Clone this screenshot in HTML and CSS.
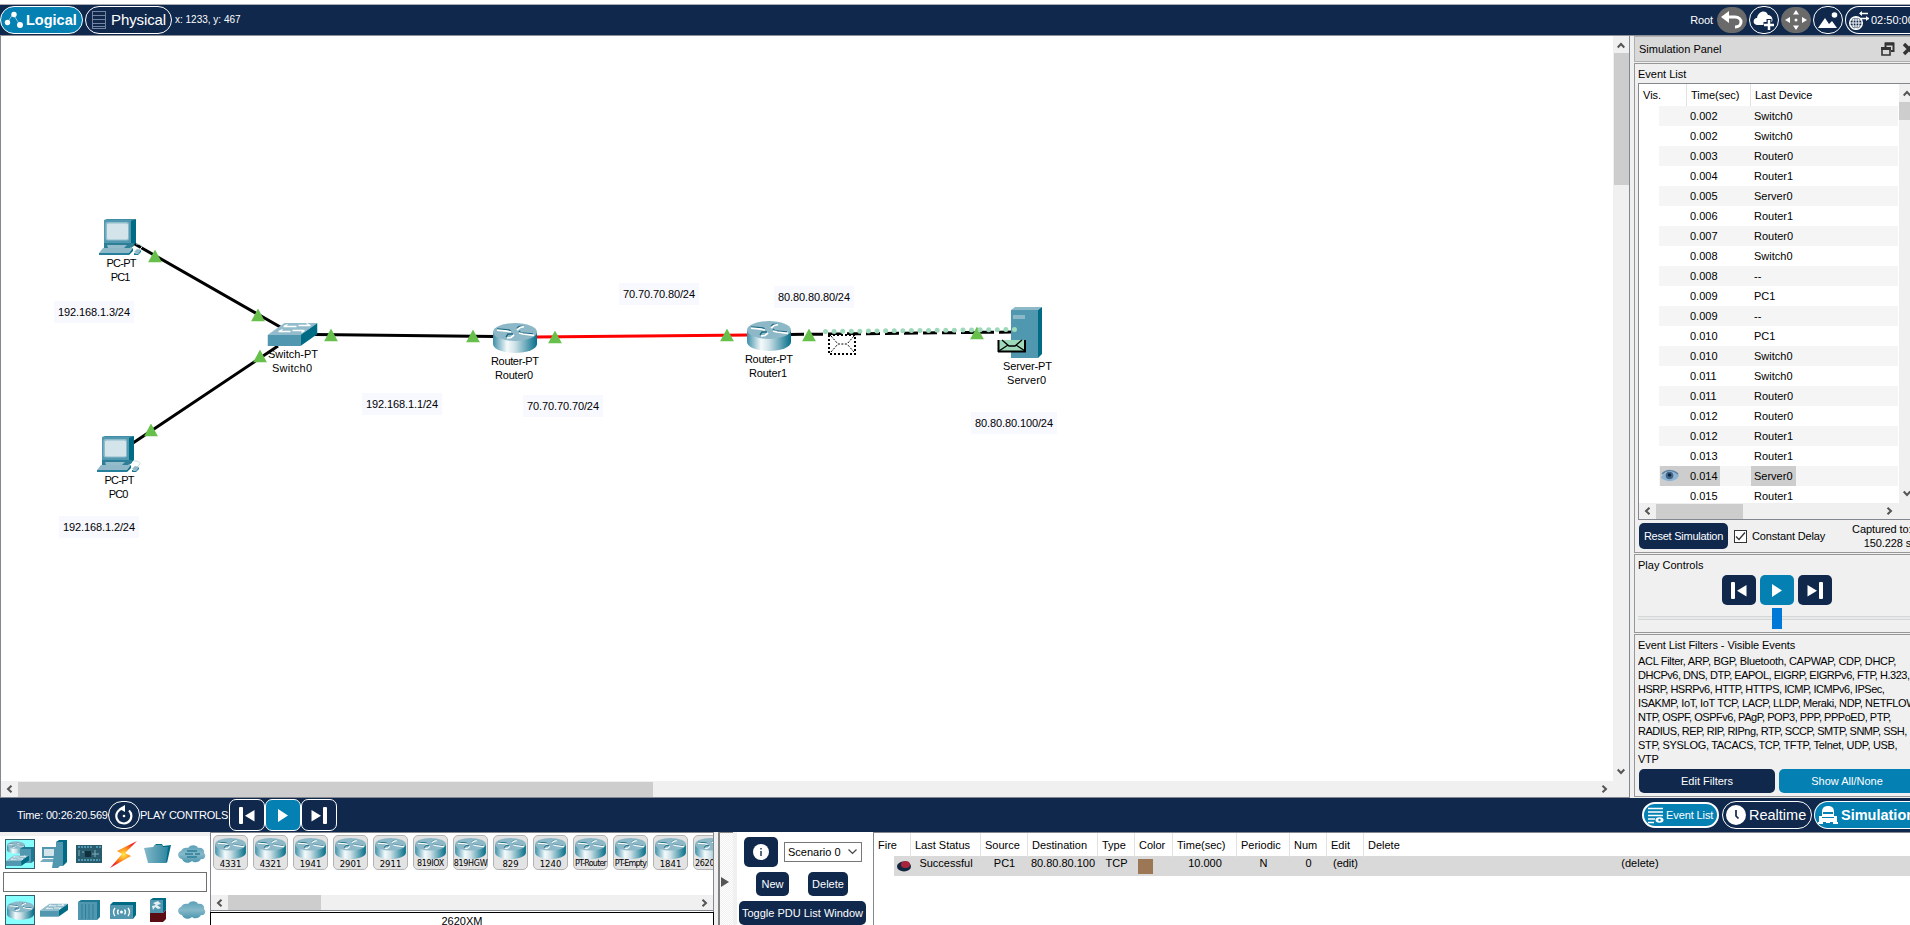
FILE: index.html
```html
<!DOCTYPE html>
<html lang="en">
<head>
<meta charset="utf-8">
<title>Network Simulator</title>
<link rel="stylesheet" href="styles.css">
</head>
<body>
<svg class="defs" width="0" height="0" aria-hidden="true">
  <defs>
    <linearGradient id="gBody"><stop offset="0" stop-color="#3f8fa8"/><stop offset=".32" stop-color="#f4fafb"/><stop offset=".5" stop-color="#cfe2e8"/><stop offset="1" stop-color="#046f8a"/></linearGradient>
    <linearGradient id="gCloud" x1="0" x2="0" y1="0" y2="1"><stop offset="0" stop-color="#5aa0b8"/><stop offset=".5" stop-color="#86b9c9"/><stop offset="1" stop-color="#4a95ae"/></linearGradient>
    <linearGradient id="gFolder"><stop offset="0" stop-color="#85b9ca"/><stop offset="1" stop-color="#2f86a0"/></linearGradient>
    <radialGradient id="gBolt"><stop offset="0" stop-color="#ffe94a"/><stop offset=".5" stop-color="#ff8a1c"/><stop offset="1" stop-color="#ee2222"/></radialGradient>
  </defs>
  <symbol id="router" viewBox="0 0 44 30">
    <path d="M0 9V21C0 26 10 30 22 30S44 26 44 21V9Z" fill="url(#gBody)"/>
    <ellipse cx="22" cy="9" rx="22" ry="9" fill="#8db8c8"/>
    <g fill="none" stroke="#1c6a80" stroke-width="1.4"><path d="M4 6l12 1 2 1.500M24 5.500l2-2h5M40 11l-12-1-2-2M20 11l-5 0-2 3"/></g>
    <g fill="none" stroke="#fff" stroke-width="1.700"><path d="M4 7.200l10 1 4 .8M24 7l3-2.500 4-.8M41 12.400l-11-1.400-4-1M21 12l-3 2.500-4 .5"/></g>
  </symbol>
  <symbol id="pc" viewBox="0 0 44 37">
    <path d="M37 25c4 0 6 1 6 3l-3 3" fill="none" stroke="#c4dbe4"/>
    <path d="M5 1L8 0H37L32 3Z" fill="#3f8ea6"/>
    <path d="M32 2L37 0V24L32 29Z" fill="#006b85"/>
    <path d="M5 1H32V24H5Z" fill="#5298b0"/>
    <rect x="6.500" y="3" width="23.500" height="18.500" rx="2" fill="#8fbccb"/><rect x="8" y="4.500" width="21" height="16" rx="1.500" fill="#d3e4eb"/>
    <path d="M5 24H35V27L31 29H5Z" fill="#2d7f98"/><path d="M8 26H28L25 29H9Z" fill="#94bccb"/>
    <path d="M4 29H34L30 34H0Z" fill="#8fb9c8"/><path d="M0 34H30V36H0Z" fill="#27809b"/><path d="M30 34L34 29V32L30 36Z" fill="#006b85"/>
    <path d="M35 33L38 30L42 31L39 35Z" fill="#8db8c8"/><path d="M35 34L39 35L42 31V33L39 36H35Z" fill="#1d7893"/>
  </symbol>
  <symbol id="switch" viewBox="0 0 50 24">
    <path d="M0 13L17 1H50L33 13Z" fill="#92bccb"/><path d="M0 13H33V24H0Z" fill="#5097af"/><path d="M33 13L50 1V12L33 24Z" fill="#006b85"/>
    <g stroke="#fff" stroke-width="1.300" fill="none"><path d="M16 4.500H29M16 4.500l4-2M31 3.500H43M43 3.500l-4-2M11 9.500H23M11 9.500l4-2M25 8.500H37M37 8.500l-3 2"/></g>
  </symbol>
  <symbol id="tri" viewBox="0 0 14 13"><path d="M7 0L14 13H0Z" fill="#67c04b"/></symbol>
  <symbol id="prev" viewBox="0 0 16 18"><rect x="0" y="1" width="4" height="17" rx="1" fill="#fff"/><path d="M15.500 4V15.500L6 9.700Z" fill="#fff"/></symbol>
  <symbol id="play" viewBox="0 0 16 18"><path d="M3 3V16L13 9.500Z" fill="#fff"/></symbol>
  <symbol id="next" viewBox="0 0 16 18"><rect x="12" y="1" width="4" height="17" rx="1" fill="#fff"/><path d="M.5 4V15.500L10 9.700Z" fill="#fff"/></symbol>
  <symbol id="cleft" viewBox="0 0 7 8"><path d="M5.500 .7L2 4L5.500 7.300" fill="none" stroke="#555" stroke-width="2"/></symbol>
  <symbol id="cright" viewBox="0 0 7 8"><path d="M1.500 .7L5 4L1.500 7.300" fill="none" stroke="#555" stroke-width="2"/></symbol>
  <symbol id="cup" viewBox="0 0 8 7"><path d="M.7 5.500L4 2L7.300 5.500" fill="none" stroke="#555" stroke-width="2"/></symbol>
  <symbol id="cdown" viewBox="0 0 8 7"><path d="M.7 1.500L4 5L7.300 1.500" fill="none" stroke="#555" stroke-width="2"/></symbol>
  <symbol id="cloud" viewBox="0 0 28 18"><path d="M4 14C-1 13-1 7 3 6 4 3 8 2 10 3 13-1 19 0 20 3 24 2 27 5 26 8 29 11 26 15 23 14 21 18 16 18 14 16 11 19 5 18 4 14Z" fill="url(#gCloud)"/></symbol>
</svg>

<header class="topbar">
  <button class="tab tab-logical"><svg width="20" height="18" viewBox="0 0 20 18"><path d="M3 12L9 3L16 14" fill="none" stroke="#8fc4dc"/><g fill="#fff"><circle cx="3.500" cy="11.500" r="2.700"/><circle cx="10" cy="3.500" r="2.700"/><circle cx="16" cy="14" r="3"/></g></svg>Logical</button>
  <button class="tab tab-physical"><svg width="14" height="20" viewBox="0 0 14 20"><path d="M.5 1V19M13.500 1V19M0 1.500H14M0 5.500H14M0 9.500H14M0 13.500H14M0 18.500H14M0 16.500H14" fill="none" stroke="#7385a3"/></svg>Physical</button>
  <span class="coords">x: 1233, y: 467</span>
  <span class="root">Root</span>
  <span class="round gray"><svg width="22" height="18" viewBox="0 0 22 18"><path d="M5 6H14C22 6 22 16 14 16" fill="none" stroke="#fff" stroke-width="3"/><path d="M0 6L8 0V12Z" fill="#fff"/></svg></span>
  <span class="round"><svg width="22" height="20" viewBox="0 0 22 20"><path d="M4 15C-1 14 0 8 4 8 5 1 13-1 15 5 20 5 21 12 17 14V15Z" fill="#fff"/><path d="M16 9V20M10.500 14.500H21.500" stroke="#0f284c" stroke-width="5"/><path d="M16 10V20M11 15H21" stroke="#fff" stroke-width="2.500"/></svg></span>
  <span class="round gray"><svg width="22" height="20" viewBox="0 0 22 20"><path d="M11 0L14 4.500H8ZM11 20L14 15.500H8ZM0 10L5 7V13ZM22 10L17 7V13Z" fill="#fff"/><circle cx="11" cy="10" r="1.500" fill="#fff"/></svg></span>
  <span class="round"><svg width="20" height="17" viewBox="0 0 20 17"><path d="M0 16L7 6L11 12L14 9L19 16Z" fill="#fff"/><circle cx="16.500" cy="3" r="2.800" fill="#fff"/></svg></span>
  <span class="clock"><svg width="21" height="20" viewBox="0 0 21 20"><circle cx="8" cy="13" r="6.300" fill="none" stroke="#fff" stroke-width="1.500"/><path d="M8 7V19M2 13H14M3 10H13M3 16H13" stroke="#fff" fill="none"/><ellipse cx="8" cy="13" rx="3" ry="6" fill="none" stroke="#fff"/><path d="M12 3.500H20M13 8.500H21" stroke="#fff" stroke-width="1.500"/><path d="M11 3.500L14 1V6ZM21 8.500L18 6V11Z" fill="#fff"/></svg>02:50:00</span>
</header>

<main class="main">
  <section class="workspace">
    <svg class="diagram" viewBox="1 36 1612 745" width="1612" height="745">
      <g stroke="#000" stroke-width="3" fill="none">
        <path d="M133 243L282 328M133 443L278 346M315 334.500L495 336.500"/>
        <path d="M535 337L750 335" stroke="#f00"/>
        <path d="M790 334.500L1012 332" stroke-dasharray="14 5"/>
      </g>
      <use href="#pc" x="99" y="219" width="44" height="37"/>
      <use href="#pc" x="97" y="436" width="44" height="37"/>
      <use href="#switch" x="267.500" y="322" width="50" height="24"/>
      <use href="#router" x="493" y="323" width="44" height="30"/>
      <use href="#router" x="747" y="321" width="44" height="30"/>
      <path d="M1011 310L1015 307H1042L1038 310Z" fill="#8db8c8"/><path d="M1011 310H1038V358H1011Z" fill="#5098b0"/><path d="M1038 310L1042 307V354L1038 358Z" fill="#006b85"/><rect x="1013" y="315" width="12" height="4" fill="#8db8c8"/>
      <g>
        <use href="#tri" x="148" y="249.500" width="14" height="13"/><use href="#tri" x="251" y="308.500" width="14" height="13"/><use href="#tri" x="324" y="328.500" width="14" height="13"/><use href="#tri" x="253" y="349.500" width="14" height="13"/><use href="#tri" x="144" y="423.500" width="14" height="13"/><use href="#tri" x="466" y="329.500" width="14" height="13"/><use href="#tri" x="548" y="330.500" width="14" height="13"/><use href="#tri" x="720" y="328.500" width="14" height="13"/><use href="#tri" x="802" y="328.500" width="14" height="13"/><use href="#tri" x="970" y="326.500" width="14" height="13"/>
      </g>
      <path d="M825.500 331.500L1014.500 329.500" stroke="#9edab9" stroke-width="5" stroke-linecap="round" stroke-dasharray="0 8.590"/>
      <g fill="none" stroke="#000"><rect x="829" y="335" width="26" height="19" fill="#fff" stroke-width="2" stroke-dasharray="2 2"/><path d="M831 336L838 344H847L854 336M831 352L838 344M854 352L847 344" stroke-dasharray="2 1.500"/></g>
      <path d="M998 340H1026V352H998Z" fill="#9edab9"/><path d="M998.500 340V352M998 351.500H1026M1025 340V352" stroke="#000" stroke-width="2" fill="none"/><path d="M1002 340L1009 346H1015L1022 340M999 351L1008 345M1025 351L1016 345" stroke="#000" stroke-width="1.300" fill="none"/>
      <g fill="#f8f8ff"><rect x="54" y="301" width="80" height="22"/><rect x="59" y="516" width="80" height="22"/><rect x="362" y="393" width="80" height="22"/><rect x="523" y="395" width="80" height="22"/><rect x="619" y="283" width="80" height="22"/><rect x="774" y="286" width="80" height="22"/><rect x="971" y="412" width="86" height="22"/></g>
      <g class="lbl">
        <text x="121.500" y="267" textLength="30">PC-PT</text><text x="120.500" y="281" textLength="19.500">PC1</text>
        <text x="119.500" y="484" textLength="30">PC-PT</text><text x="118.500" y="498" textLength="19.500">PC0</text>
        <text x="293" y="358" textLength="50">Switch-PT</text><text x="292" y="372" textLength="40">Switch0</text>
        <text x="515" y="365" textLength="48">Router-PT</text><text x="514" y="379" textLength="38">Router0</text>
        <text x="769" y="363" textLength="48">Router-PT</text><text x="768" y="377" textLength="38">Router1</text>
        <text x="1027.500" y="370" textLength="49">Server-PT</text><text x="1026.500" y="384" textLength="39">Server0</text>
        <text x="94" y="316" textLength="72">192.168.1.3/24</text><text x="99" y="531" textLength="72">192.168.1.2/24</text><text x="402" y="408" textLength="72">192.168.1.1/24</text><text x="563" y="410" textLength="72">70.70.70.70/24</text><text x="659" y="298" textLength="72">70.70.70.80/24</text><text x="814" y="301" textLength="72">80.80.80.80/24</text><text x="1014" y="427" textLength="78">80.80.80.100/24</text>
      </g>
    </svg>
    <div class="vscroll"><svg width="8" height="7"><use href="#cup"/></svg><i></i><svg width="8" height="7"><use href="#cdown"/></svg></div>
    <div class="hscroll"><svg width="7" height="8"><use href="#cleft"/></svg><i></i><svg width="7" height="8"><use href="#cright"/></svg></div>
  </section>

  <aside class="side">
    <div class="side-title"><span>Simulation Panel</span><svg width="14" height="14" viewBox="0 0 14 14"><path d="M4.500 5V1.500H12.500V9H10" fill="none" stroke="#333" stroke-width="2"/><path d="M1 6H9V13H1Z" fill="none" stroke="#333" stroke-width="1.600"/><path d="M0 6.500H10M4 2H13" stroke="#333" stroke-width="3"/></svg><svg width="14" height="14" viewBox="0 0 14 14"><path d="M2 2L12 12M12 2L2 12" stroke="#333" stroke-width="3.400"/></svg></div>
    <section class="group g-list">
      <h2>Event List</h2>
      <div class="events">
        <div class="ev-table">
          <div class="ev-head"><span>Vis.</span><span>Time(sec)</span><span>Last Device</span></div>
          <div class="ev-rows">
            <div class="ev"><b>0.002</b><b>Switch0</b></div>
            <div class="ev"><b>0.002</b><b>Switch0</b></div>
            <div class="ev"><b>0.003</b><b>Router0</b></div>
            <div class="ev"><b>0.004</b><b>Router1</b></div>
            <div class="ev"><b>0.005</b><b>Server0</b></div>
            <div class="ev"><b>0.006</b><b>Router1</b></div>
            <div class="ev"><b>0.007</b><b>Router0</b></div>
            <div class="ev"><b>0.008</b><b>Switch0</b></div>
            <div class="ev"><b>0.008</b><b>--</b></div>
            <div class="ev"><b>0.009</b><b>PC1</b></div>
            <div class="ev"><b>0.009</b><b>--</b></div>
            <div class="ev"><b>0.010</b><b>PC1</b></div>
            <div class="ev"><b>0.010</b><b>Switch0</b></div>
            <div class="ev"><b>0.011</b><b>Switch0</b></div>
            <div class="ev"><b>0.011</b><b>Router0</b></div>
            <div class="ev"><b>0.012</b><b>Router0</b></div>
            <div class="ev"><b>0.012</b><b>Router1</b></div>
            <div class="ev"><b>0.013</b><b>Router1</b></div>
            <div class="ev sel"><b><svg width="18" height="14" viewBox="0 0 18 14"><path d="M0 9C2 2 13 0 18 6C16 13 6 14 0 9Z" fill="#8fb4d3"/><path d="M1 5C6 0 13 1 17 5" fill="none" stroke="#5c83a6" stroke-width="1.500"/><circle cx="8.500" cy="6.500" r="3.800" fill="#3f6488"/><circle cx="8.500" cy="6" r="1.800" fill="#10243a"/></svg>0.014</b><b>Server0</b></div>
            <div class="ev"><b>0.015</b><b>Router1</b></div>
          </div>
          <div class="ev-hs"><svg width="7" height="8"><use href="#cleft"/></svg><i></i><svg width="7" height="8"><use href="#cright"/></svg></div>
        </div>
        <div class="ev-vs"><svg width="8" height="7"><use href="#cup"/></svg><i></i><svg width="8" height="7"><use href="#cdown"/></svg></div>
      </div>
      <div class="reset-row"><button class="btn">Reset Simulation</button><span class="check"><svg width="11" height="11" viewBox="0 0 11 11"><path d="M1 5.500L4 8.500L10 1.500" fill="none" stroke="#333" stroke-width="1.300"/></svg></span><span class="delay">Constant Delay</span><span class="captured">Captured to:<br>150.228 s</span></div>
    </section>
    <section class="group g-play">
      <h2>Play Controls</h2>
      <div class="pbtns"><button class="btn"><svg width="16" height="18"><use href="#prev"/></svg></button><button class="btn blue"><svg width="16" height="18"><use href="#play"/></svg></button><button class="btn"><svg width="16" height="18"><use href="#next"/></svg></button></div>
      <div class="slider"><i></i></div>
    </section>
    <section class="group g-filter">
      <h2>Event List Filters - Visible Events</h2>
      <p>ACL Filter, ARP, BGP, Bluetooth, CAPWAP, CDP, DHCP,<br><span class="narrow">DHCPv6, DNS, DTP, EAPOL, EIGRP, EIGRPv6, FTP, H.323,</span><br><span class="narrow">HSRP, HSRPv6, HTTP, HTTPS, ICMP, ICMPv6, IPSec,</span><br><span class="medium">ISAKMP, IoT, IoT TCP, LACP, LLDP, Meraki, NDP, NETFLOW,</span><br><span class="narrow">NTP, OSPF, OSPFv6, PAgP, POP3, PPP, PPPoED, PTP,</span><br><span class="narrow">RADIUS, REP, RIP, RIPng, RTP, SCCP, SMTP, SNMP, SSH,</span><br>STP, SYSLOG, TACACS, TCP, TFTP, Telnet, UDP, USB,<br>VTP</p>
      <div class="fbtns"><button class="btn">Edit Filters</button><button class="btn blue">Show All/None</button></div>
    </section>
  </aside>
</main>

<div class="playbar">
  <span class="time">Time: 00:26:20.569</span>
  <span class="refresh"><svg width="20" height="20" viewBox="0 0 20 20"><path d="M9 3.500A7.500 7.500 0 1 0 15 5.500" fill="none" stroke="#fff" stroke-width="2.200"/><path d="M5 3.500L11 0V7Z" fill="#fff"/><circle cx="10" cy="11" r="1.300" fill="#fff"/></svg></span>
  <span class="pc-label">PLAY CONTROLS:</span>
  <button class="ctl"><svg width="16" height="18"><use href="#prev"/></svg></button><button class="ctl blue"><svg width="16" height="18"><use href="#play"/></svg></button><button class="ctl"><svg width="16" height="18"><use href="#next"/></svg></button>
  <button class="pill p-events"><svg width="16" height="17" viewBox="0 0 16 17"><path d="M0 1.500H15M0 5H15M0 8.500H15M0 12H7M0 15.500H6" stroke="#fff" stroke-width="1.600"/><ellipse cx="11.500" cy="13" rx="4" ry="2.800" fill="#fff"/><circle cx="11.500" cy="13" r="1.200" fill="#0480b3"/></svg>Event List</button>
  <button class="pill p-real"><svg width="20" height="20" viewBox="0 0 20 20"><circle cx="10" cy="10" r="10" fill="#fff"/><path d="M10 5V11L12.500 13.500" fill="none" stroke="#0f284c" stroke-width="1.700"/></svg>Realtime</button>
  <button class="pill p-sim"><svg width="20" height="20" viewBox="0 0 20 20"><path d="M4 7C4 3 6 1 10 1S16 3 16 7V12H4Z" fill="#fff"/><path d="M1 11H4V13H16V11H19V17H20V19H15V17H12V18H8V17H5V19H0V17H1Z" fill="#fff"/><path d="M5 8H15" stroke="#0480b3" stroke-width="2"/></svg>Simulation</button>
</div>

<footer class="bottom">
  <div class="palette">
    <div class="icons">
      <span class="ic on"><svg width="28" height="28" viewBox="0 0 28 28"><use href="#router" x="1" y="1" width="18" height="13"/><path d="M14 9L17 7H28V21L25 23H14Z" fill="#1d7893"/><path d="M14 9H25V23H14Z" fill="#5097af"/><use href="#switch" x="0" y="14" width="23" height="13"/></svg></span>
      <span class="ic"><svg width="28" height="28" viewBox="0 0 28 28"><path d="M16 2L19 0H27V22L23 26H16Z" fill="#006b85"/><path d="M16 2H23V26H16Z" fill="#5097af"/><path d="M2 7H16V18H2Z" fill="#5097af"/><path d="M4 9H14V16H4Z" fill="#d3e4eb"/><path d="M3 19H17L14 22H0Z" fill="#76abbf"/><path d="M14 14L18 13L22 24L18 28H12Z" fill="#5097af"/></svg></span>
      <span class="ic"><svg width="26" height="20" viewBox="0 0 26 20"><rect y="1" width="26" height="18" fill="#285c6c"/><path d="M2 3H17M20 3H25M2 16H24" stroke="#5097af" stroke-width="2" stroke-dasharray="2 1"/><rect x="9" y="7" width="6" height="6" fill="#12303b"/><path d="M3 6V12M19 6V13M6 8H8M16 10H23" stroke="#83adba"/></svg></span>
      <span class="ic"><svg width="27" height="27" viewBox="0 0 27 27"><path d="M27 0L7 10L12 13L0 27L21 15L15 12Z" fill="url(#gBolt)"/></svg></span>
      <span class="ic"><svg width="27" height="20" viewBox="0 0 27 20"><path d="M10 2L12 0H18L19 2L27 1L23 19L20 16Z" fill="#006b85"/><path d="M0 4L9 3L11 1H18L19 3H24L22 19H4Z" fill="url(#gFolder)"/></svg></span>
      <span class="ic"><svg width="28" height="18" viewBox="0 0 28 18"><use href="#cloud" width="28" height="18"/><path d="M9 6H19M7 9H15M17 9H22M9 12H19" stroke="#2c7f99" stroke-width="1.500"/></svg></span>
    </div>
    <div class="search"></div>
    <div class="icons">
      <span class="ic on"><svg width="27" height="19"><use href="#router"/></svg></span>
      <span class="ic"><svg width="28" height="14"><use href="#switch"/></svg></span>
      <span class="ic"><svg width="22" height="20" viewBox="0 0 22 20"><path d="M0 2L3 0H22V17L19 20H0Z" fill="#1d7893"/><path d="M0 2H19V20H0Z" fill="#5097af"/><path d="M4 4V19M7.500 4V19M11 4V19M15 4V19" stroke="#2f7f99"/></svg></span>
      <span class="ic"><svg width="26" height="17" viewBox="0 0 26 17"><path d="M0 3L3 0H26V13L23 17H0Z" fill="#006b85"/><path d="M0 3H23V17H0Z" fill="#5097af"/><path d="M5 6Q2 10 5 14M8.500 7.500Q6.500 10 8.500 12.500M18 6Q21 10 18 14M14.500 7.500Q16.500 10 14.500 12.500" fill="none" stroke="#fff" stroke-width="1.300"/><circle cx="11.500" cy="10" r="1.500" fill="#fff"/></svg></span>
      <span class="ic"><svg width="16" height="24" viewBox="0 0 16 24"><path d="M0 2L3 0H16V12L13 15H0Z" fill="#006b85"/><path d="M0 2H13V15H0Z" fill="#5097af"/><path d="M0 15H13L16 12V21L13 24H0Z" fill="#5a0d12"/><path d="M3 5L8 3L11 6L7 7L11 10L8 11L5 9L3 12L2 8L6 7Z" fill="#e6eff3"/></svg></span>
      <span class="ic"><svg width="28" height="18"><use href="#cloud"/></svg></span>
    </div>
  </div>
  <div class="devices">
    <div class="tiles">
      <span class="tile"><svg width="31" height="21"><use href="#router"/></svg>4331</span><span class="tile"><svg width="31" height="21"><use href="#router"/></svg>4321</span><span class="tile"><svg width="31" height="21"><use href="#router"/></svg>1941</span><span class="tile"><svg width="31" height="21"><use href="#router"/></svg>2901</span><span class="tile"><svg width="31" height="21"><use href="#router"/></svg>2911</span><span class="tile mid"><svg width="31" height="21"><use href="#router"/></svg>819IOX</span><span class="tile mid"><svg width="31" height="21"><use href="#router"/></svg>819HGW</span><span class="tile"><svg width="31" height="21"><use href="#router"/></svg>829</span><span class="tile"><svg width="31" height="21"><use href="#router"/></svg>1240</span><span class="tile tight"><svg width="31" height="21"><use href="#router"/></svg>PT-Router</span><span class="tile tight"><svg width="31" height="21"><use href="#router"/></svg>PT-Empty</span><span class="tile"><svg width="31" height="21"><use href="#router"/></svg>1841</span><span class="tile mid"><svg width="31" height="21"><use href="#router"/></svg>2620XM</span>
    </div>
    <div class="dev-hs"><svg width="7" height="8"><use href="#cleft"/></svg><i></i><svg width="7" height="8"><use href="#cright"/></svg></div>
    <div class="dev-name">2620XM</div>
  </div>
  <div class="splitter"><svg width="8" height="10" viewBox="0 0 8 10"><path d="M0 0L8 5L0 10Z" fill="#555"/></svg></div>
  <div class="scenario">
    <div class="sc-row r1"><button class="btn info"><svg width="16" height="16" viewBox="0 0 16 16"><circle cx="8" cy="8" r="8" fill="#fff"/><path d="M8 4V5.500M8 7V12" stroke="#5c6a80" stroke-width="2"/></svg></button><span class="select">Scenario 0<svg width="9" height="6" viewBox="0 0 9 6"><path d="M.5 .5L4.500 4.500L8.500 .5" fill="none" stroke="#444" stroke-width="1.200"/></svg></span></div>
    <div class="sc-row r2"><button class="btn">New</button><button class="btn">Delete</button></div>
    <button class="btn toggle">Toggle PDU List Window</button>
  </div>
  <div class="pdu">
    <div class="pdu-grid pdu-head"><span>Fire</span><span>Last Status</span><span>Source</span><span>Destination</span><span>Type</span><span>Color</span><span>Time(sec)</span><span>Periodic</span><span>Num</span><span>Edit</span><span>Delete</span></div>
    <div class="pdu-grid pdu-row"><span class="fire"><svg width="15" height="12" viewBox="0 0 15 12"><ellipse cx="7" cy="6.500" rx="7" ry="5" fill="#12263f"/><ellipse cx="8.500" cy="4.500" rx="4.500" ry="3.500" fill="#a8243c"/></svg></span><span>Successful</span><span>PC1</span><span>80.80.80.100</span><span>TCP</span><span><i class="swatch"></i></span><span>10.000</span><span>N</span><span>0</span><span>(edit)</span><span>(delete)</span></div>
  </div>
</footer>
</body>
</html>
```
FILE: styles.css
```css
* { box-sizing: border-box; }
html, body { margin: 0; height: 925px; overflow: hidden; }
body { width: 1910px; background: #fff; color: #000; font: 11px/14px "Liberation Sans", Arial, sans-serif; display: flex; flex-direction: column; padding-top: 4px; white-space: nowrap; }
button { font: inherit; color: inherit; padding: 0; border: 0; margin: 0; }
svg { flex: none; display: block; }
.defs { position: absolute; }
h2 { font: inherit; margin: 0; }

.topbar { flex: none; height: 32px; background: #0f284c; border-top: 1px solid #a9adb3; border-bottom: 1px solid #8d8f99; color: #fff; display: flex; align-items: center; }
.tab { height: 28px; border: 1px solid #fff; border-radius: 14px; display: flex; align-items: center; background: #0f284c; }
.tab-logical { width: 83px; background: #0480b3; font-size: 14.5px; font-weight: bold; padding-left: 3px; gap: 2px; }
.tab-physical { width: 87px; margin-left: 2px; font-size: 15px; letter-spacing: -.1px; padding-left: 6px; gap: 5px; }
.coords { margin-left: 3px; font-size: 10px; }
.root { margin-left: auto; margin-right: 4px; letter-spacing: -.1px; }
.round { width: 30px; height: 28px; border: 1px solid #fff; border-radius: 15px; margin-right: 2px; display: flex; align-items: center; justify-content: center; }
.round.gray { background: #6a6a6a; border-color: #6a6a6a; height: 26px; }
.clock { width: 65px; height: 28px; border: 1px solid #fff; border-right: 0; border-radius: 14px 0 0 14px; display: flex; align-items: center; padding-left: 2px; gap: 2px; overflow: hidden; }

.main { flex: none; height: 762px; display: flex; background: #f0f0f0; }
.workspace { width: 1630px; flex: none; border: solid #828790; border-width: 0 1px 1px; display: grid; grid-template: 745px 16px / 1612px 16px; background: #f0f0f0; }
.diagram { background: #fff; }
.lbl text { font-size: 11px; text-anchor: middle; }
.vscroll { display: flex; flex-direction: column; align-items: center; padding: 6px 0 6px; }
.vscroll i { width: 15px; height: 132px; margin: 4px 0 auto; background: #cdcdcd; }
.hscroll { display: flex; align-items: center; padding: 0 5px; background: #f0f0f0; }
.hscroll i { width: 635px; height: 15px; margin: 0 auto 0 5px; background: #cdcdcd; }

.side { flex: 1; min-width: 0; margin-left: 4px; display: flex; flex-direction: column; overflow: hidden; }
.side-title { flex: none; height: 26px; border: 1px solid #b0b0b0; border-right: 0; background: #d9d9d9; display: flex; align-items: center; padding-left: 4px; margin-bottom: 1px; }
.side-title svg { margin-right: 7px; }
.side-title span { width: 242px; }
.side-title svg:last-child { margin-right: -6px; }
.group { border: 1px solid #979797; border-right: 0; padding-left: 3px; margin-bottom: 1px; flex: none; }
.g-list { height: 490px; } .g-play { height: 79px; } .g-filter { height: 163px; margin: 0; }
.g-list h2 { padding: 3px 0 2px; }
.events { height: 437px; border: 1px solid #828790; border-right: 0; background: #fff; display: flex; }
.ev-table { width: 260px; flex: none; display: flex; flex-direction: column; }
.ev-head { height: 22px; display: grid; grid-template-columns: 47px 64px 1fr; line-height: 23px; }
.ev-head span { padding-left: 4px; }
.ev-head span + span { border-left: 1px solid #e2e2e2; }
.ev-rows { height: 397px; overflow: hidden; line-height: 20px; }
.ev { height: 20px; margin-left: 20px; margin-right: 1px; display: flex; }
.ev:nth-child(odd) { background: #f5f5f5; }
.ev b { font-weight: normal; padding: 0 3px; }
.ev b:first-child { width: 60px; margin: 0 31px 0 1px; padding: 0 0 0 30px; display: flex; align-items: center; }
.ev svg { margin-left: -29px; margin-right: 11px; }
.sel b { background: #cdcdcd; }
.ev-hs { height: 16px; background: #f0f0f0; display: flex; align-items: center; padding: 0 6px 0 5px; }
.ev-hs i { width: 87px; height: 15px; margin: 0 auto 0 5px; background: #cdcdcd; }
.ev-vs { width: 16px; flex: none; background: #f0f0f0; display: flex; flex-direction: column; align-items: center; padding: 6px 0 22px; }
.ev-vs i { width: 16px; height: 18px; background: #cdcdcd; margin: 5px 0 auto; }
.btn { background: #0f284c; color: #fff; border-radius: 5px; display: flex; align-items: center; justify-content: center; flex: none; }
.blue { background: #0480b3 !important; }
.reset-row { display: flex; align-items: center; height: 32px; }
.reset-row .btn { width: 89px; height: 26px; margin: 0 6px 0 1px; letter-spacing: -.25px; }
.check { width: 13px; height: 13px; border: 1px solid #333; background: #fff; margin-right: 5px; flex: none; }
.delay { width: 74px; letter-spacing: -.15px; }
.captured { margin-left: 27px; text-align: right; width: 59px; flex: none; letter-spacing: -.1px; }
.g-play h2 { padding: 3px 0; }
.pbtns { display: flex; gap: 4px; padding-left: 84px; }
.pbtns .btn { width: 34px; height: 30px; }
.slider { height: 21px; margin-top: 3px; display: flex; padding-left: 134px; background: linear-gradient(#d6d6d6, #d6d6d6) 0 8px / 100% 1px no-repeat, linear-gradient(#d6d6d6, #d6d6d6) 0 11px / 100% 1px no-repeat, linear-gradient(#e7eaea, #e7eaea) 0 9px / 100% 2px no-repeat; }
.slider i { width: 10px; background: #0078d7; }
.g-filter h2 { padding: 3px 0 2px; letter-spacing: -.08px; }
.g-filter p { margin: 0; letter-spacing: -.31px; }
.g-filter .medium { letter-spacing: -.38px; }
.g-filter .narrow { letter-spacing: -.48px; }
.fbtns { display: flex; gap: 4px; padding: 3px 0 0 1px; }
.fbtns .btn { width: 136px; height: 24px; }

.playbar { flex: none; height: 34px; background: #0f284c; color: #fff; display: flex; align-items: center; }
.time { width: 91px; margin-left: 17px; letter-spacing: -.2px; }
.refresh { width: 32px; height: 28px; border: 1px solid #fff; border-radius: 14px; display: flex; align-items: center; justify-content: center; }
.pc-label { width: 89px; letter-spacing: -.25px; }
.ctl { width: 36px; height: 32px; border: 1px solid #fff; border-radius: 7px; background: #0f284c; display: flex; align-items: center; justify-content: center; }
.pill { border: 1px solid #fff; border-radius: 14px; display: flex; align-items: center; background: #0480b3; }
.p-events { margin-left: auto; width: 77px; height: 26px; border-width: 2px; padding-left: 4px; gap: 2px; letter-spacing: -.1px; }
.p-real { width: 90px; height: 28px; margin: 0 2px 0 3px; background: #0f284c; font-size: 14.5px; padding-left: 3px; gap: 3px; }
.p-sim { width: 96px; height: 28px; border-right: 0; border-radius: 14px 0 0 14px; font-size: 14.5px; font-weight: bold; padding-left: 3px; gap: 3px; overflow: hidden; }

.bottom { flex: 1; min-height: 0; display: flex; overflow: hidden; background: #fff; }
.palette { width: 210px; flex: none; padding: 3px 0 0 3px; border-top: 4px solid #f0f0f0; }
.icons { display: flex; gap: 4.4px; padding-left: 2px; }
.ic { width: 30px; height: 30px; display: flex; align-items: center; justify-content: center; }
.on { background: #8ff; border: 1px solid #35606c; }
.search { width: 204px; height: 20px; border: 1px solid #707070; margin: 3px 0; }
.devices { width: 504px; flex: none; border: 1px solid #828790; border-bottom: 0; display: flex; flex-direction: column; }
.tiles { flex: none; height: 62px; padding: 2px 0 0 2px; display: flex; gap: 5px; overflow: hidden; }
.tile { width: 35px; height: 35px; flex: none; border: 1px solid #b4b4b4; border-radius: 5px; background: #e3e3e3; display: flex; flex-direction: column; align-items: center; padding-top: 2px; font: 8.5px/10px "DejaVu Sans", sans-serif; }
.mid { font-size: 8px; letter-spacing: -.3px; }
.tight { font-size: 8px; letter-spacing: -.8px; }
.dev-hs { flex: none; height: 16px; background: #f0f0f0; display: flex; align-items: center; padding: 0 5px; border-bottom: 1px solid #828790; }
.dev-hs i { width: 93px; height: 15px; background: #cdcdcd; margin: 0 auto 0 5px; }
.dev-name { flex: none; height: 20px; margin: 1px -1px 0; border: solid #000; border-width: 1px 1px 0; text-align: center; line-height: 17px; }
.splitter { width: 23px; flex: none; background: conic-gradient(#f0f0f0 25%, #fff 0 50%, #f0f0f0 0 75%, #fff 0) 0 0 / 2px 2px; border-left: 4px solid #f0f0f0; border-right: 4px solid #f0f0f0; box-shadow: inset 2px 1px #828282; padding: 45px 0 0 3px; }
.scenario { width: 136px; flex: none; padding: 5px 0 0 2px; }
.sc-row { display: flex; align-items: center; }
.r1 { gap: 6px; padding-left: 5px; }
.info { width: 34px; height: 30px; }
.select { width: 78px; height: 20px; border: 1px solid #777; display: flex; align-items: center; justify-content: space-between; padding: 0 4px 0 3px; }
.r2 { padding: 5px 0 5px 17px; gap: 19px; }
.r2 .btn { width: 33px; height: 24px; }
.r2 .btn + .btn { width: 40px; }
.toggle { width: 127px; height: 24px; }
.pdu { flex: 1; min-width: 0; border: solid #828790; border-width: 1px 0 0 1px; }
.pdu-grid { display: grid; grid-template-columns: 37px 70px 47px 70px 37px 38px 64px 53px 37px 37px 1fr; }
.pdu-head { height: 23px; line-height: 24px; }
.pdu-head span { padding-left: 4px; border-right: 1px solid #e2e2e2; }
.pdu-head span:last-child { border: 0; }
.pdu-row { height: 20px; line-height: 14px; text-align: center; background: linear-gradient(#d9d9d9, #d9d9d9) 20px 0 no-repeat; }
.fire { padding: 4px 0 0 23px; }
.swatch { display: block; width: 15px; height: 15px; margin: 3px 0 0 3px; background: #9b7755; }
.pdu-row span:last-child { padding-left: 6px; }
```
